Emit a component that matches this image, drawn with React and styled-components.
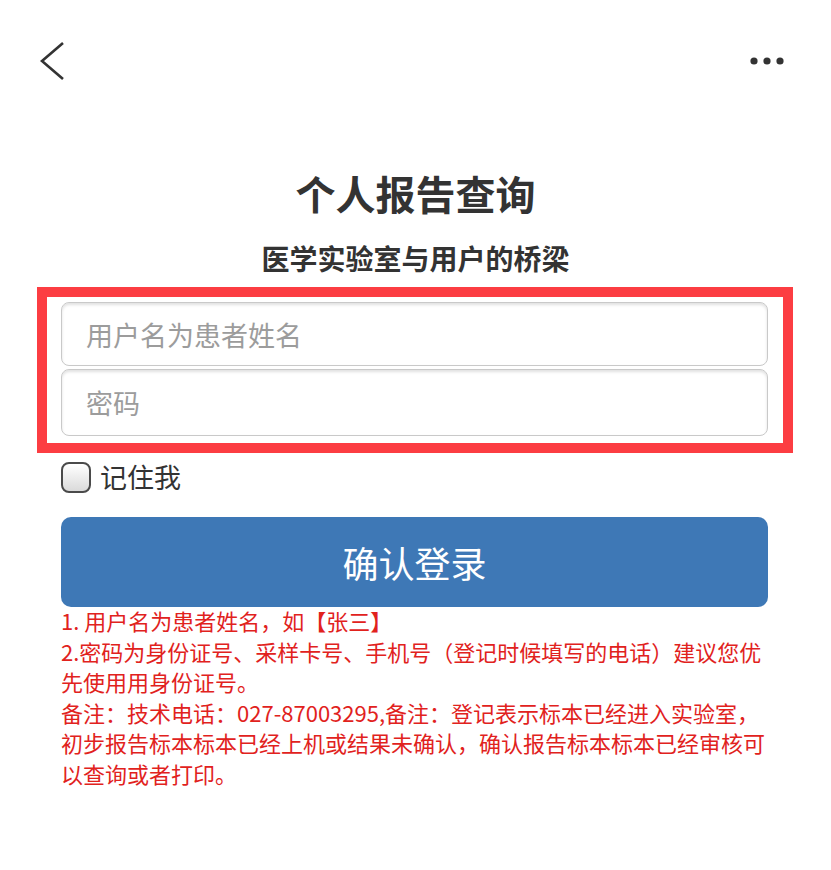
import React from "react";
import styled, { createGlobalStyle } from "styled-components";

const GlobalStyle = createGlobalStyle`
    body {
        margin: 0;
        background: #ffffff;
        font-family: "Noto Sans CJK SC", "Noto Sans", sans-serif;
    }
`;

const Page = styled.div`
    width: 831px;
    min-height: 870px;
    background: #fff;
`;

const Header = styled.div`
    height: 122px;
    display: flex;
    align-items: center;
    justify-content: space-between;
    padding: 0 46px 0 40px;
`;

const IconBtn = styled.div`
    display: flex;
    align-items: center;
`;

const Title = styled.h1`
    margin: 46px 0 0;
    font-size: 40px;
    line-height: 50px;
    font-weight: 700;
    color: #333;
    text-align: center;
`;

const Subtitle = styled.h2`
    margin: 22px 0 0;
    font-size: 28px;
    line-height: 36px;
    font-weight: 700;
    color: #333;
    text-align: center;
`;

const Highlight = styled.div`
    margin: 11px 38px 0 37px;
    border: 10px solid #fc3d42;
    padding: 5px 15px 7px 14px;
    display: flex;
    flex-direction: column;
    gap: 3px;
`;

const Field = styled.input`
    box-sizing: border-box;
    width: 100%;
    height: ${(p) => p.$h}px;
    border: 1px solid #c9c9c9;
    border-radius: 8px;
    box-shadow: inset 0 2px 3px rgba(0, 0, 0, 0.12);
    padding: 0 24px;
    font-family: "Noto Sans CJK SC", sans-serif;
    font-size: 27px;
    color: #333;
    outline: none;
    &::placeholder {
        color: #9c9c9c;
    }
`;

const Form = styled.div`
    padding: 0 63px 0 61px;
`;

const Remember = styled.label`
    display: flex;
    align-items: center;
    gap: 9px;
    margin-top: 6px;
    font-size: 27px;
    line-height: 36px;
    color: #333;
`;

const Box = styled.span`
    box-sizing: border-box;
    width: 30px;
    height: 31px;
    border: 2px solid #4a4a4a;
    border-radius: 8px;
    background: linear-gradient(#ffffff, #dadada);
`;

const Submit = styled.button`
    margin-top: 22px;
    width: 100%;
    height: 90px;
    border: none;
    border-radius: 10px;
    background: #3e78b6;
    color: #fff;
    font-family: "Noto Sans CJK SC", sans-serif;
    font-size: 36px;
    display: flex;
    align-items: center;
    justify-content: center;
`;

const Notes = styled.div`
    margin-top: -2px;
    color: #e1221d;
    font-size: 22px;
    line-height: 30.5px;
    white-space: nowrap;
`;

const Line = styled.div``;

export default function App() {
    return (
        <Page>
            <GlobalStyle />
            <Header>
                <IconBtn>
                    <svg width="26" height="40" viewBox="0 0 26 40">
                        <polyline points="23,2 2,20 23,38" fill="none" stroke="#333" strokeWidth="2.6" />
                    </svg>
                </IconBtn>
                <IconBtn>
                    <svg width="36" height="10" viewBox="0 0 36 10">
                        <circle cx="5" cy="5" r="3.6" fill="#333" />
                        <circle cx="18" cy="5" r="3.6" fill="#333" />
                        <circle cx="31" cy="5" r="3.6" fill="#333" />
                    </svg>
                </IconBtn>
            </Header>
            <Title>个人报告查询</Title>
            <Subtitle>医学实验室与用户的桥梁</Subtitle>
            <Highlight>
                <Field $h={64} placeholder="用户名为患者姓名" />
                <Field $h={67} type="password" placeholder="密码" />
            </Highlight>
            <Form>
                <Remember>
                    <Box />
                    记住我
                </Remember>
                <Submit>确认登录</Submit>
                <Notes>
                    <Line>1. 用户名为患者姓名，如【张三】</Line>
                    <Line>2.密码为身份证号、采样卡号、手机号（登记时候填写的电话）建议您优</Line>
                    <Line>先使用用身份证号。</Line>
                    <Line>备注：技术电话：027-87003295,备注：登记表示标本已经进入实验室，</Line>
                    <Line>初步报告标本标本已经上机或结果未确认，确认报告标本标本已经审核可</Line>
                    <Line>以查询或者打印。</Line>
                </Notes>
            </Form>
        </Page>
    );
}
